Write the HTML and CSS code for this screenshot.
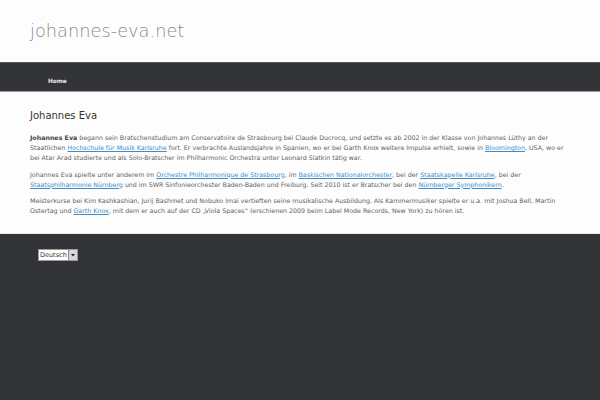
FILE: index.html
```html
<!DOCTYPE html>
<html lang="de">
<head>
<meta charset="utf-8">
<title>johannes-eva.net</title>
<link rel="stylesheet" href="styles.css">
</head>
<body>
<header class="site-header">
  <div class="site-title">johannes-eva.net</div>
</header>
<nav class="main-nav">
  <ul class="menu">
    <li><a href="#">Home</a></li>
  </ul>
</nav>
<main class="content">
  <h1 class="entry-title">Johannes Eva</h1>
  <p><strong>Johannes Eva</strong> begann sein Bratschenstudium am Conservatoire de Strasbourg bei Claude Ducrocq, und setzte es ab 2002 in der Klasse von Johannes Lüthy an der Staatlichen <a href="#">Hochschule für Musik Karlsruhe</a> fort. Er verbrachte Auslandsjahre in Spanien, wo er bei Garth Knox weitere Impulse erhielt, sowie in <a href="#">Bloomington</a>, USA, wo er bei Atar Arad studierte und als Solo-Bratscher im Philharmonic Orchestra unter Leonard Slatkin tätig war.</p>
  <p>Johannes Eva spielte unter anderem im <a href="#">Orchestre Philharmonique de Strasbourg</a>, im <a href="#">Baskischen Nationalorchester</a>, bei der <a href="#">Staatskapelle Karlsruhe</a>, bei der <a href="#">Staatsphilharmonie Nürnberg</a> und im SWR Sinfonieorchester Baden-Baden und Freiburg. Seit 2010 ist er Bratscher bei den <a href="#">Nürnberger Symphonikern</a>.</p>
  <p>Meisterkurse bei Kim Kashkashian, Jurij Bashmet und Nobuko Imai vertieften seine musikalische Ausbildung. Als Kammermusiker spielte er u.a. mit Joshua Bell, Martin Ostertag und <a href="#">Garth Knox</a>, mit dem er auch auf der CD „Viola Spaces“ (erschienen 2009 beim Label Mode Records, New York) zu hören ist.</p>
</main>
<footer class="site-footer">
  <div class="lang-select">
    <span class="lang-value">Deutsch</span><span class="lang-arrow"><svg width="6" height="6" viewBox="0 0 6 6"><path d="M1 2h4L3 4.5z" fill="#222"/></svg></span>
  </div>
</footer>
</body>
</html>
```
FILE: styles.css
```css
html, body {
  margin: 0;
  padding: 0;
}
body {
  font-family: "DejaVu Sans", sans-serif;
  background: #fdfdfd;
  color: #5a5a5a;
  width: 600px;
  height: 400px;
  overflow: hidden;
  display: flex;
  flex-direction: column;
}
.site-header {
  height: 62px;
  padding-left: 30px;
  box-sizing: border-box;
  padding-top: 20px;
  background: #fdfdfd;
}
.site-title {
  font-size: 17.8px;
  font-weight: 200;
  color: #8a8a8a;
  line-height: 22px;
}
.main-nav {
  background: #333438;
  border-top: 1px solid #56575b;
  border-bottom: 1px solid #9a9b9e;
  height: 28px;
  flex: none;
}
.menu {
  list-style: none;
  margin: 0;
  padding: 0 0 0 48px;
  display: flex;
  height: 100%;
  align-items: center;
}
.menu a {
  color: #ececec;
  font-size: 5.8px;
  font-weight: bold;
  text-decoration: none;
}
.content {
  padding: 16px 30px 10px 30px;
  width: 540px;
  background: #fdfdfd;
}
.entry-title {
  font-size: 10px;
  font-weight: normal;
  color: #333;
  margin: 0 0 9px 0;
  line-height: 16px;
}
.content p {
  font-size: 6.3px;
  line-height: 10px;
  margin: 0 0 6.5px 0;
  color: #5f5f5f;
}
.content strong {
  color: #444;
}
.content a {
  color: #3b8dc8;
}
.site-footer {
  flex: 1;
  background: #333438;
  border-top: 1px solid #e6e6e6;
  padding: 15px 38px;
  display: flex;
  align-items: flex-start;
}
.lang-select {
  display: flex;
  align-items: stretch;
  background: #fff;
  border: 1px solid #9a9a9a;
  height: 10px;
  font-size: 6.5px;
  color: #333;
}
.lang-value {
  padding: 0 1px;
  line-height: 10px;
}
.lang-arrow {
  width: 8px;
  background: #d8d8d8;
  border-left: 1px solid #888;
  display: flex;
  align-items: center;
  justify-content: center;
}
```
